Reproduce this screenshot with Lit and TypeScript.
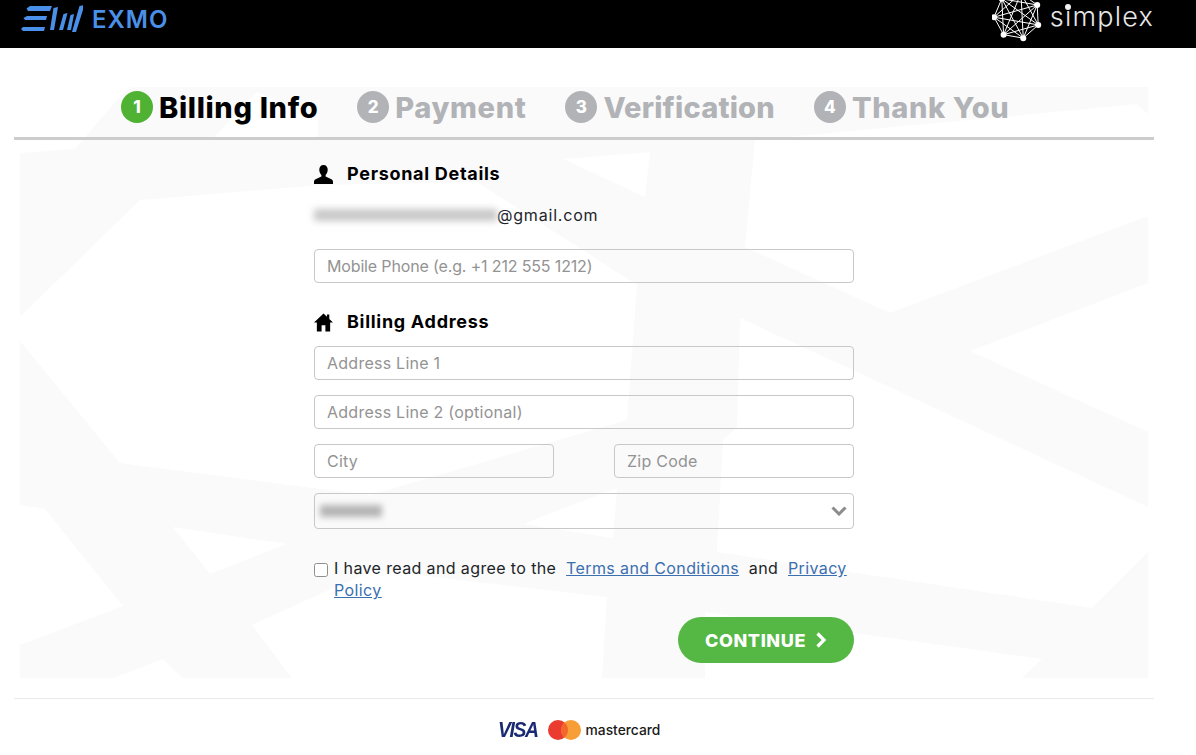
import { LitElement, html, css, svg } from "lit";
import { customElement } from "lit/decorators.js";

const STEPS = [
  { n: 1, label: "Billing Info", active: true },
  { n: 2, label: "Payment", active: false },
  { n: 3, label: "Verification", active: false, snug: true },
  { n: 4, label: "Thank You", active: false },
];

// simplex mark: seven nodes on a circle, every pair linked
const NODES = Array.from({ length: 7 }, (_, i) => {
  const a = (i / 7) * Math.PI * 2 - 0.5;
  return [1018 + 23 * Math.cos(a), 16 + 23 * Math.sin(a)];
});

// white holes cut out of the pale backdrop, in page coordinates
const HOLES = [
  "20,87 130,87 110,108 75,149 20,153",
  "257,92 318,117 318,138 213,138",
  "20,317 140,200 320,185 477,182 637,285 627,420 370,495 320,489 120,463 20,341",
  "563,159 650,152 645,197",
  "20,505 45,509 123,606 20,645",
  "173,527 287,544 210,574",
  "113,678 163,659 182,678",
  "252,625 320,594 375,570 607,597 602,678 292,678",
  "523,524 617,488 613,538",
  "755,140 745,247 890,313 1148,216 1148,114 1137,104 850,131",
  "970,351 1148,283 1148,432",
  "740,318 883,384 1148,507 1148,552 1092,608 850,572 717,552 723,440 737,427",
  "705,612 1042,659 1022,678 705,678",
];

@customElement("app-root")
export class AppRoot extends LitElement {
  static styles = css`
    :host {
      display: block;
      height: 755px;
      overflow: hidden;
      background: #fff;
      font-family: Inter, "Liberation Sans", sans-serif;
      color: #212529;
    }
    .top {
      height: 48px;
      background: #000;
      display: flex;
      justify-content: space-between;
      padding: 0 42px 0 21px;
      overflow: hidden;
    }
    .exmo {
      display: flex;
      align-items: center;
      gap: 9px;
      height: 38px;
      color: #4a90e8;
      font-size: 24px;
      font-weight: 600;
      letter-spacing: 1px;
    }
    .simplex {
      position: relative;
      display: flex;
      align-items: flex-start;
      gap: 6px;
      color: #e6e6e6;
    }
    .simplex svg {
      display: block;
      margin-top: -8px;
    }
    .simplex span {
      font-size: 27px;
      font-weight: 300;
      letter-spacing: 1.2px;
      margin-top: 4px;
      line-height: 26px;
    }
    .simplex i {
      position: absolute;
      right: 83px;
      top: 4px;
      width: 6px;
      height: 6px;
      border-radius: 50%;
      background: #f2f2f2;
    }
    .main {
      position: relative;
      margin: 0 42px 0 14px;
    }
    .wm {
      position: absolute;
      left: 6px;
      top: 39px;
      width: 1128px;
      height: 591px;
    }
    .steps {
      position: relative;
      height: 92px;
      box-sizing: border-box;
      padding: 40px 0 0 107px;
      border-bottom: 3px solid #cccccc;
      display: flex;
      gap: 39px;
      font-size: 29px;
      font-weight: 800;
      letter-spacing: 0.65px;
      color: #b1b3b7;
    }
    .step {
      display: flex;
      gap: 6px;
      height: 38px;
      align-items: center;
    }
    .step.snug {
      letter-spacing: 0.2px;
    }
    .step.on {
      color: #000;
    }
    .num {
      width: 32px;
      height: 32px;
      border-radius: 50%;
      background: #b1b3b7;
      color: #fff;
      font-size: 17px;
      letter-spacing: 0;
      display: flex;
      align-items: center;
      justify-content: center;
    }
    .on .num {
      background: #4fb233;
    }
    form {
      position: relative;
      width: 540px;
      margin-left: 300px;
      display: flex;
      flex-direction: column;
    }
    h2 {
      margin: 22px 0 0;
      display: flex;
      align-items: center;
      gap: 14px;
      font-size: 18px;
      line-height: 24px;
      font-weight: 700;
      letter-spacing: 0.7px;
      color: #000;
    }
    h2 svg {
      width: 19px;
      height: 19px;
    }
    .email {
      display: flex;
      align-items: center;
      height: 24px;
      margin: 17px 0 22px;
      font-size: 16px;
      letter-spacing: 0.8px;
    }
    .blur {
      width: 183px;
      height: 12px;
      background: #c8c8c8;
      filter: blur(3.5px);
    }
    .field {
      box-sizing: border-box;
      height: 34px;
      border: 1px solid #c8c8c8;
      border-radius: 4px;
      padding: 0 12px;
      display: flex;
      align-items: center;
      font-size: 16px;
      letter-spacing: 0.25px;
      color: #939393;
    }
    .field.tight {
      letter-spacing: -0.15px;
    }
    h2.addr {
      margin: 27px 0 12px;
    }
    .stack {
      display: flex;
      flex-direction: column;
      gap: 15px;
    }
    .row {
      display: flex;
      justify-content: space-between;
    }
    .row .field {
      width: 240px;
    }
    .field.select {
      height: 36px;
      justify-content: space-between;
      padding: 0 6px 0 5px;
    }
    .select .blur {
      width: 62px;
      height: 12px;
      background: #b4b4b4;
      filter: blur(3px);
    }
    .terms {
      display: flex;
      gap: 6px;
      margin-top: 28px;
      font-size: 16px;
      letter-spacing: 0.38px;
      line-height: 22px;
    }
    .box {
      flex: none;
      box-sizing: border-box;
      width: 14px;
      height: 14px;
      margin-top: 6px;
      border: 1px solid #8f8f8f;
      border-radius: 2.5px;
      background: #fff;
    }
    a {
      color: #3a6fb0;
      text-decoration: underline;
    }
    .actions {
      display: flex;
      justify-content: flex-end;
      margin-top: 16px;
    }
    .continue {
      width: 176px;
      height: 46px;
      border: 0;
      border-radius: 23px;
      background: #55b845;
      color: #fff;
      font: 800 18px Inter, "Liberation Sans", sans-serif;
      letter-spacing: 0.6px;
      display: flex;
      align-items: center;
      justify-content: center;
      gap: 9px;
    }
    .foot {
      position: relative;
      margin-top: 35px;
      border-top: 1px solid #e9e9e9;
      height: 56px;
      display: flex;
      justify-content: center;
      align-items: flex-start;
      padding: 19px 10px 0 0;
      box-sizing: border-box;
      gap: 10px;
    }
    .visa {
      display: inline-block;
      font: italic 800 22px/24px "Liberation Sans", sans-serif;
      color: #1a2a72;
      letter-spacing: -1.6px;
      transform: scaleX(0.88);
      transform-origin: left;
      margin-right: -5px;
    }
    .mc {
      display: flex;
      align-items: center;
      gap: 5px;
      height: 24px;
      font-size: 13.8px;
      font-weight: 500;
      color: #1a1a1a;
    }
  `;

  private backdrop() {
    return html`<svg class="wm" viewBox="20 87 1128 591" preserveAspectRatio="none">
      <rect x="20" y="87" width="1128" height="591" fill="#fafafa"></rect>
      <g fill="#fff">${HOLES.map((p) => svg`<polygon points=${p}></polygon>`)}</g>
    </svg>`;
  }

  private network() {
    const lines = [];
    for (let i = 0; i < NODES.length; i++) {
      for (let j = i + 1; j < NODES.length; j++) {
        lines.push(svg`<line x1=${NODES[i][0]} y1=${NODES[i][1]} x2=${NODES[j][0]} y2=${NODES[j][1]}></line>`);
      }
    }
    return html`<svg width="52" height="50" viewBox="993 -8 52 50">
      <g stroke="#fff" stroke-width="1">${lines}</g>
      <g fill="#fff">${NODES.map((p) => svg`<circle cx=${p[0]} cy=${p[1]} r="3"></circle>`)}</g>
    </svg>`;
  }

  render() {
    return html`
      <div class="top">
        <div class="exmo">
          <svg width="62" height="28" viewBox="21 5 62 28" fill="#4a90e8">
            <path d="M30 6H52L50 11H28L26.500 8.500ZM27 16H47L46 20H25L23.500 18ZM23 27H45L44 31H23L21 29Z"></path>
            <path d="M53.500 8 58 7 54 30 50 30ZM63.500 14 67.500 13 63 30 59 30ZM70.500 15 74 14 71 30 67 30ZM79.500 6 84.500 5 76 32 72 32Z"></path>
          </svg>
          EXMO
        </div>
        <div class="simplex">${this.network()}<span>simplex</span><i></i></div>
      </div>
      <div class="main">
        ${this.backdrop()}
        <div class="steps">
          ${STEPS.map(
            (s) => html`<div class="step ${s.active ? "on" : ""} ${s.snug ? "snug" : ""}">
              <span class="num">${s.n}</span>${s.label}
            </div>`
          )}
        </div>
        <form>
          <h2>
            <svg viewBox="0 0 18 18" fill="#000">
              <path d="M9 0C6.300 0 5 2 5 4.600 5 6.600 5.900 8.500 7 9.500V11L1.500 13.500C.5 14 0 15 0 16V18H18V16C18 15 17.500 14 16.500 13.500L11 11V9.500C12.100 8.500 13 6.600 13 4.600 13 2 11.700 0 9 0Z"></path>
            </svg>
            Personal Details
          </h2>
          <div class="email"><span class="blur"></span>@gmail.com</div>
          <div class="field tight">Mobile Phone (e.g. +1 212 555 1212)</div>
          <h2 class="addr">
            <svg viewBox="0 0 18 18" fill="#000">
              <path d="M9 .5 0 9H2.700V17.500H7.200V11.500H10.800V17.500H15.300V9H18L14.500 5.700V1.500H12.300V3.600Z"></path>
            </svg>
            Billing Address
          </h2>
          <div class="stack">
            <div class="field">Address Line 1</div>
            <div class="field">Address Line 2 (optional)</div>
            <div class="row">
              <div class="field">City</div>
              <div class="field">Zip Code</div>
            </div>
            <div class="field select">
              <span class="blur"></span>
              <svg width="16" height="10" viewBox="0 0 16 10">
                <path d="M1.500 1.500 8 8 14.500 1.500" fill="none" stroke="#8c8c8c" stroke-width="3"></path>
              </svg>
            </div>
          </div>
          <div class="terms">
            <span class="box"></span>
            <span>I have read and agree to the &nbsp;<a>Terms and Conditions</a>&nbsp; and &nbsp;<a>Privacy</a> <a>Policy</a></span>
          </div>
          <div class="actions">
            <button class="continue" type="button">
              CONTINUE
              <svg width="12" height="16" viewBox="0 0 12 16">
                <path d="M2.500 1.500 9 8 2.500 14.500" fill="none" stroke="#fff" stroke-width="3.200"></path>
              </svg>
            </button>
          </div>
        </form>
        <div class="foot">
          <span class="visa">VISA</span>
          <span class="mc">
            <svg width="33" height="20" viewBox="0 0 33 20">
              <circle cx="10" cy="10" r="10" fill="#eb3b30"></circle>
              <circle cx="23" cy="10" r="10" fill="#f79e36"></circle>
              <path d="M16.500 2.400a10 10 0 0 1 0 15.200a10 10 0 0 1 0-15.200Z" fill="#f4672c"></path>
            </svg>
            mastercard
          </span>
        </div>
      </div>
    `;
  }
}
